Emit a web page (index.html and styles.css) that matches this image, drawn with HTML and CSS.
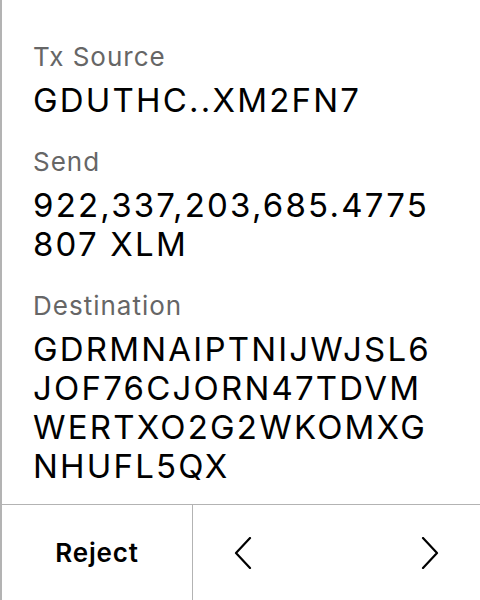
FILE: index.html
```html
<!DOCTYPE html>
<html>
<head>
<meta charset="utf-8">
<link rel="stylesheet" href="styles.css">
</head>
<body>
<div class="screen">
  <div class="content">
    <div class="field">
      <div class="label">Tx Source</div>
      <div class="value">GDUTHC..XM2FN7</div>
    </div>
    <div class="field">
      <div class="label">Send</div>
      <div class="value">922,337,203,685.4775<br>807 XLM</div>
    </div>
    <div class="field">
      <div class="label">Destination</div>
      <div class="value">GDRMNAIPTNIJWJSL6<br>JOF76CJORN47TDVM<br>WERTXO2G2WKOMXG<br>NHUFL5QX</div>
    </div>
  </div>
  <div class="footer">
    <div class="reject">Reject</div>
    <div class="nav">
      <svg class="chev" width="18" height="32" viewBox="0 0 18 32"><path d="M16 1 L2 16 L16 31" fill="none" stroke="#000" stroke-width="2.2" stroke-linecap="round" stroke-linejoin="round"/></svg>
      <svg class="chev" width="18" height="32" viewBox="0 0 18 32"><path d="M2 1 L16 16 L2 31" fill="none" stroke="#000" stroke-width="2.2" stroke-linecap="round" stroke-linejoin="round"/></svg>
    </div>
  </div>
</div>
</body>
</html>
```

FILE: styles.css
```css
html, body {
  margin: 0;
  padding: 0;
  background: #fff;
}
.screen {
  width: 480px;
  height: 600px;
  box-sizing: border-box;
  border-left: 2px solid #b3b3b3;
  display: flex;
  flex-direction: column;
  font-family: Inter, "Noto Sans", sans-serif;
  color: #000;
}
.content {
  flex: 1;
  padding: 42px 0 0 31px;
  display: flex;
  flex-direction: column;
  gap: 27px;
}
.field {
  display: flex;
  flex-direction: column;
  gap: 9px;
}
.label {
  font-size: 26px;
  line-height: 30px;
  letter-spacing: 1px;
  color: #666;
}
.value {
  font-size: 33px;
  line-height: 39px;
  letter-spacing: 2.2px;
  color: #000;
}
.footer {
  height: 95px;
  border-top: 1px solid #b3b3b3;
  display: flex;
}
.reject {
  width: 190px;
  border-right: 1px solid #b3b3b3;
  display: flex;
  align-items: center;
  justify-content: center;
  font-size: 26px;
  font-weight: 600;
  letter-spacing: 0.8px;
}
.nav {
  flex: 1;
  display: flex;
  align-items: center;
  justify-content: space-between;
  padding: 0 41px;
}
```
